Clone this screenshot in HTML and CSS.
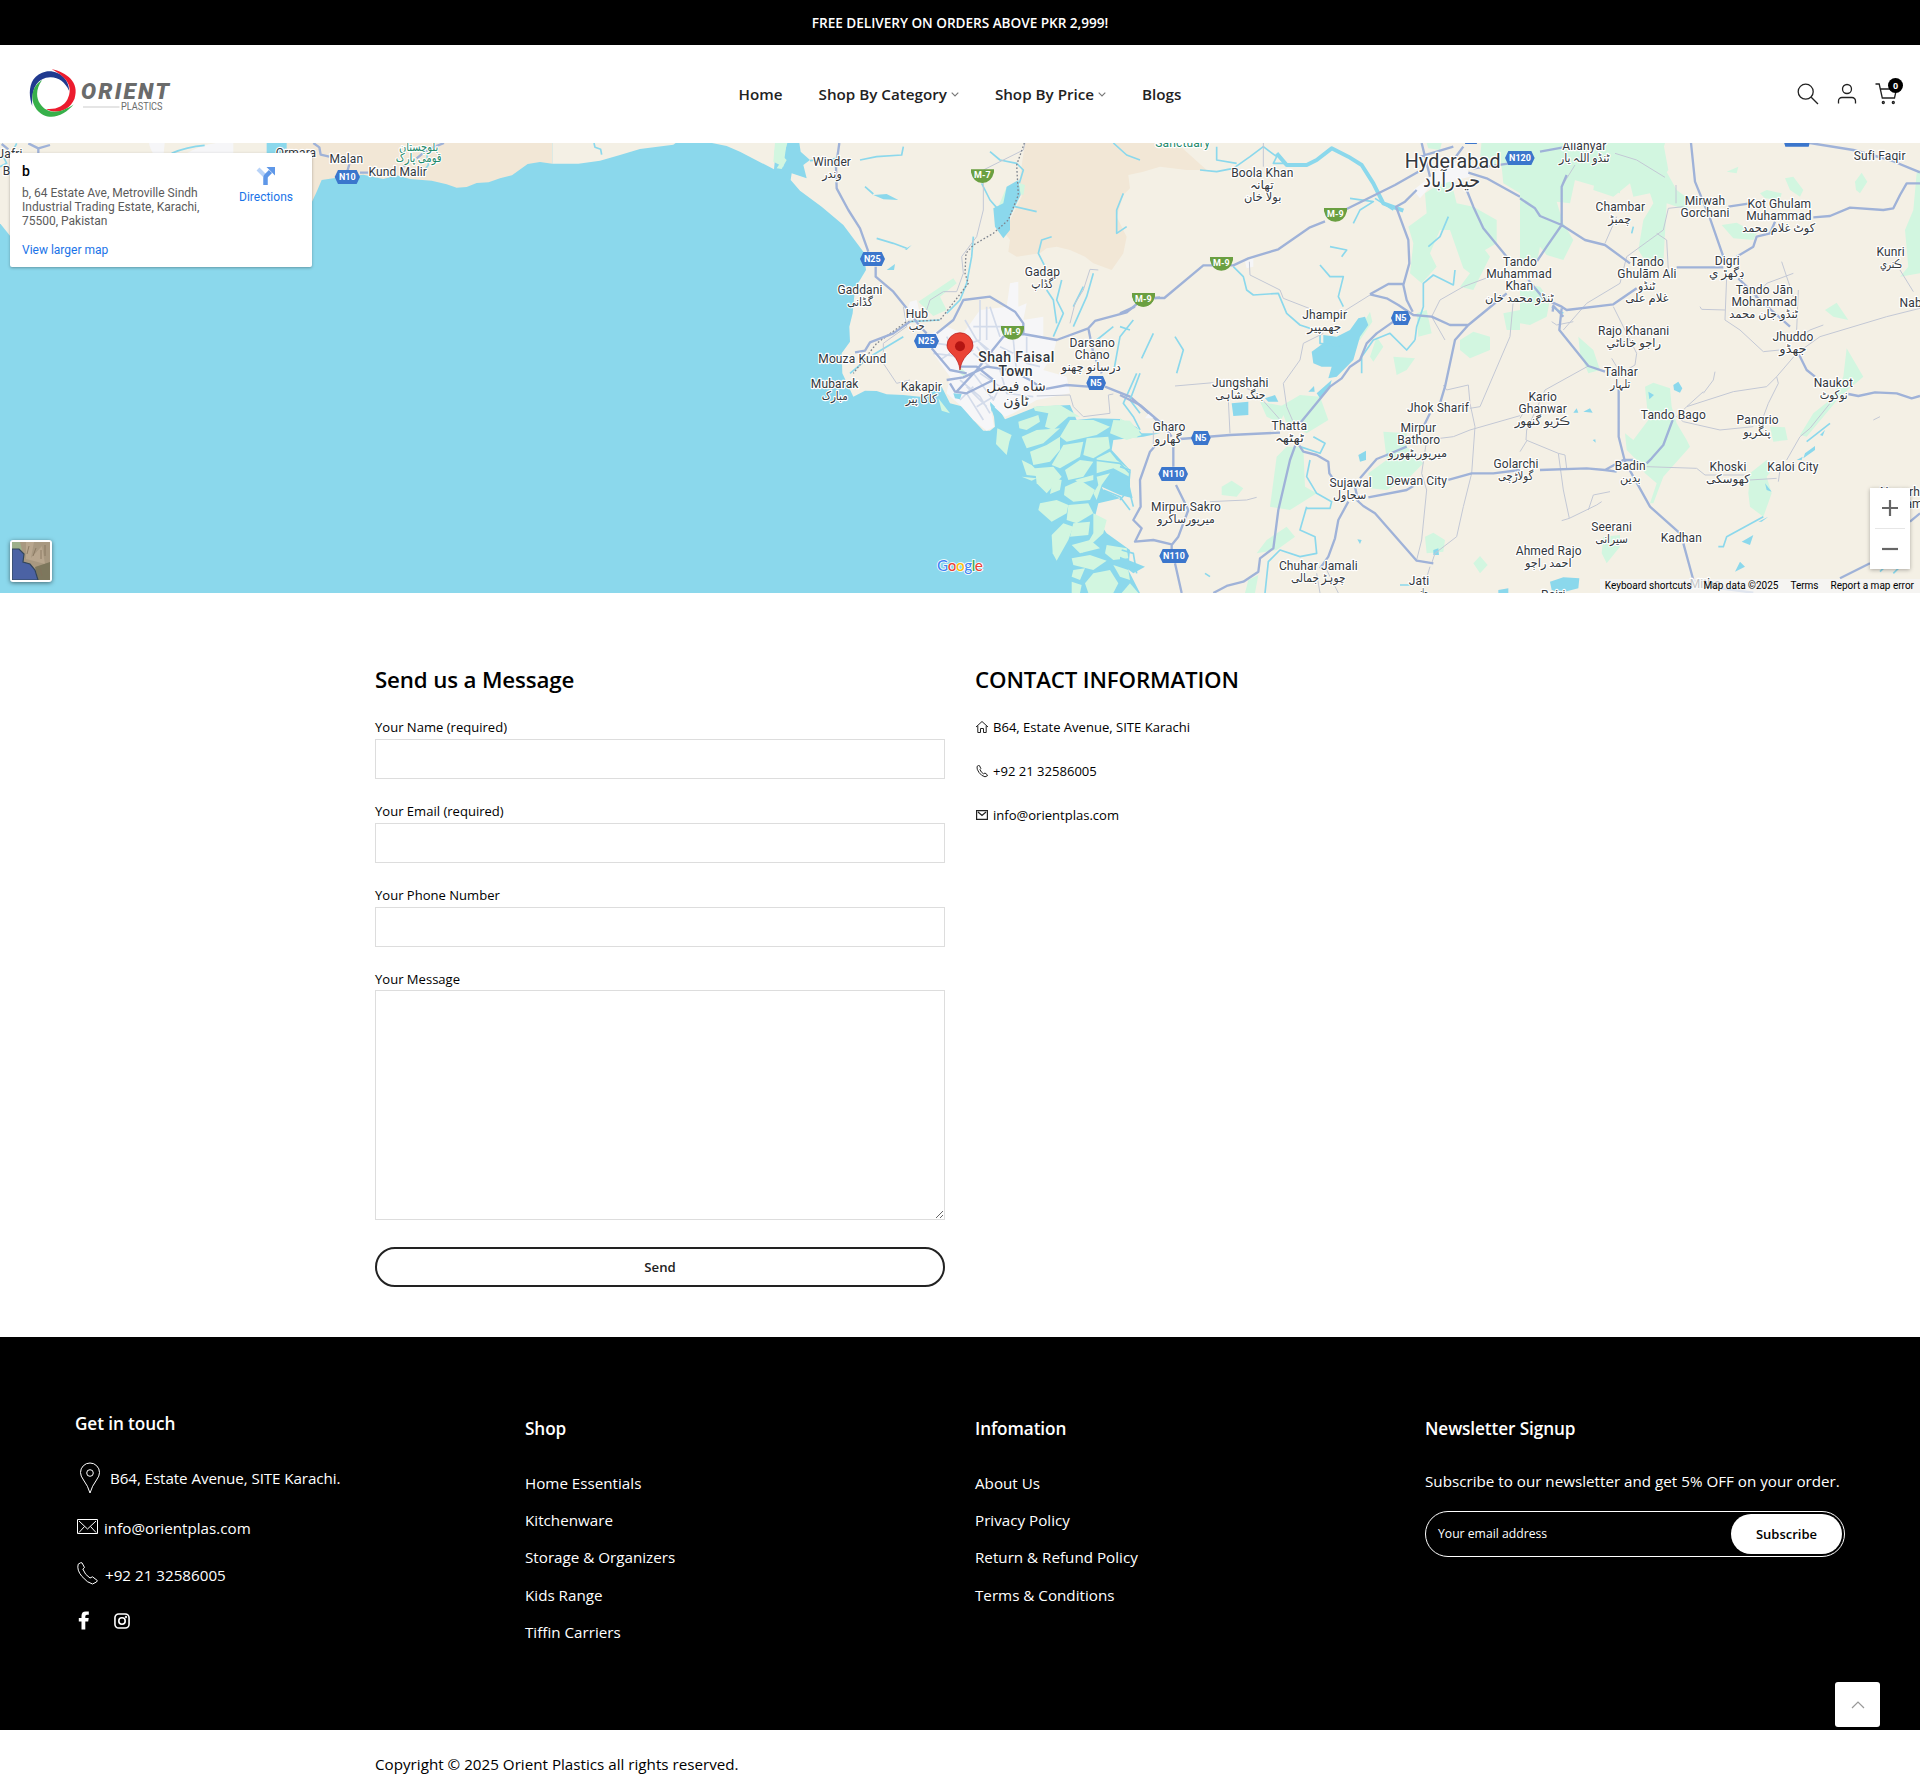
FILE: index.html
```html
<!DOCTYPE html>
<html lang="en">
<head>
<meta charset="utf-8">
<title>Contact – Orient Plastics</title>
<link rel="stylesheet" href="styles.css">
</head>
<body>
<div class="announce">FREE DELIVERY ON ORDERS ABOVE PKR 2,999!</div>

<header class="header">
  <a class="logo">
    <svg width="144" height="52" viewBox="28 67 144 52">
      <defs><path id="swoosh" d="M33 106C28 92 30 75 47 71.500 61 70 70 80 70 91 66 82 59 77 51 77.300 38 78 32 88 33 106Z"/></defs>
      <g transform="translate(-.8 -1)">
        <use href="#swoosh" fill="#213a8f"/>
        <use href="#swoosh" fill="#ec1c2e" transform="rotate(120 53.300 93.300)"/>
        <use href="#swoosh" fill="#37b04a" transform="rotate(240 53.300 93.300)"/>
      </g>
      <text class="logo-name" x="81" y="98.300" textLength="88">ORIENT</text>
      <text class="logo-sub" x="121" y="109" textLength="41.500" lengthAdjust="spacingAndGlyphs">PLASTICS</text>
      <path d="M83 106H119.500" stroke="#dcdddd" stroke-width="1.600"/>
    </svg>
  </a>
  <nav class="nav">
    <a>Home</a>
    <a>Shop By Category<svg class="caret" width="8" height="5" viewBox="0 0 8 5"><path d="M.7.700 4 4 7.300.700"/></svg></a>
    <a>Shop By Price<svg class="caret" width="8" height="5" viewBox="0 0 8 5"><path d="M.7.700 4 4 7.300.700"/></svg></a>
    <a>Blogs</a>
  </nav>
  <div class="tools">
    <svg width="22" height="22" viewBox="0 0 22 22"><circle cx="8.700" cy="8.700" r="7.500"/><path d="M14.200 14.200 21 21"/></svg>
    <svg width="20" height="22" viewBox="0 0 20 22"><circle cx="10" cy="6" r="4.500"/><path d="M1.500 20.500V18a3.500 3.500 0 0 1 3.500-3.500h10a3.500 3.500 0 0 1 3.500 3.500v2.500"/></svg>
    <span class="cart">
      <svg width="24" height="22" viewBox="0 0 24 22"><path d="M.5 1H4.200L7.300 15H19.500L21.500 6H5.500"/><circle cx="8.300" cy="19.500" r="1"/><circle cx="18.300" cy="19.500" r="1"/></svg>
      <b class="badge">0</b>
    </span>
  </div>
</header>

<section class="map">
<svg class="map-art" width="1920" height="450" viewBox="0 143 1920 450">
  <!-- western coast -->
  <g transform="scale(.33333)">
    <path class="land" d="M0 420H800V720H40L0 670Z"/>
    <path class="city" d="M445 420Q455 480 490 470L495 420ZM560 460Q620 425 700 425V465Z"/>
    <path class="river" d="M515 460Q560 440 614 436M0 500 20 490 10 470 40 450 50 430"/>
    <path class="road" d="M85 430 115 445 150 435M115 445V465M5 432 25 448"/>
    <g class="lbl s"><text x="30" y="474">Jafri</text><text x="20" y="526">B</text></g>
  </g>
  <g transform="translate(300 140) scale(.33333)">
    <path class="desert" d="M-40 0H757V71L720 66 683 72 636 106 600 115 566 127 530 129 500 141 470 143 440 133 395 122 330 117 290 106 250 117 190 104 120 112 65 120 50 155 36 185-40 210Z"/>
    <path class="land" d="M757 0H1140L1120 14 1020 27 960 45 900 62 835 71H757ZM1236 9H1430L1422 88 1320 35 1280 18Z"/>
    <path class="green" d="M1428 9H1462L1450 50 1460 60 1445 87 1430 85 1440 70 1422 40Z"/>
    <path class="river" d="M882 9 885 22 902 28 905 44M370 95 385 75 380 40"/>
    <path class="road" d="M40 9 58 22 62 44 88 50M148 72 142 95M180 98 205 98M350 55 375 35 400 22 432 9M310 80 325 68M-30 42 0 36"/>
    <g class="lbl s">
      <text x="139" y="70">Malan</text><text x="293" y="109">Kund Malir</text><text x="-12" y="52">Ormara</text>
    </g>
    <g class="lbl park"><text x="356" y="32" textLength="118" lengthAdjust="spacingAndGlyphs">بلوچستان</text><text x="356" y="66" textLength="138" lengthAdjust="spacingAndGlyphs">قومی پارک</text></g>
    <path class="shield" d="M114 90H170L180 111 170 132H114L104 111Z"/><text class="sh" x="142" y="121">N10</text>
  </g>

  <!-- Karachi and the Indus delta -->
  <g transform="translate(760 140) scale(.33333)">
    <path class="land" d="M118 9 122 35 150 60 130 75 140 115 95 100 92 120 120 152 185 200 250 255 310 335 318 390 300 420 285 445 278 520 268 560 270 605 245 640 247 700 280 770 315 752 350 753 380 763 430 765 480 770 545 740 570 790 610 800 640 840 670 872 690 872 705 860 702 830 690 795 700 780 735 838 830 800 930 795 950 840 1000 835 1080 837 1130 862 1145 880 1200 880 1150 890 1060 900 1055 930 1110 990 1110 1040 1118 1075 1080 1065 1025 1040 1030 1050 1080 1075 1015 1090 1005 1130 1040 1180 1110 1230 1105 1290 1140 1359H3600V0H118Z"/>
    <path class="desert" d="M795 9H1250L1340 90 1280 90 1200 80 1150 95 1105 105 1110 145 1090 165 1070 230 1100 290 1090 340 1055 390 1000 370 975 350 930 330 890 320 860 325 840 340 770 350 745 335 750 300 735 280 755 230 785 170 780 110Z"/>
    <path class="city" d="M450 485 470 480 480 520 430 545ZM490 590 560 560 610 580 660 510 740 500 750 430 775 425 775 500 800 490 790 540 850 530 850 590 890 600 880 640 850 690 920 710 930 760 830 780 760 820 735 830 690 790 702 860 680 872 640 840 600 795 560 760 570 710 520 640Z"/>
    <path class="green" d="M475 485 580 415 590 430 540 470 560 510 520 528ZM45 9H80L70 80 40 65ZM600 680 620 700 610 708 595 695ZM535 775 570 820 545 812ZM780 130 795 135 790 165 770 160ZM715 200 740 140 760 150 735 195Z"/>
    <g class="green">
      <path d="M712 865 755 885 748 905 740 945 708 912Z"/><path d="M775 845 835 825 840 845 800 870 778 865Z"/><path d="M820 800 900 795 960 830 925 830 880 870 855 860 865 820 825 812Z"/><path d="M785 890 830 870 900 865 850 910 800 925Z"/><path d="M930 840 1000 840 1050 860 1010 885 920 905 900 890Z"/><path d="M1060 840 1110 842 1145 885 1100 900 1050 880Z"/><path d="M810 935 860 915 900 890 900 930 870 965 820 975Z"/><path d="M910 915 970 905 960 950 900 985 875 975Z"/><path d="M980 895 1045 890 1050 925 1000 955 970 945Z"/><path d="M785 960 815 975 850 1010 800 1005Z"/><path d="M825 985 880 980 905 1010 860 1060 830 1030Z"/><path d="M915 990 960 960 1000 965 970 1010 925 1020Z"/><path d="M1010 955 1050 935 1070 960 1110 990 1108 1010 1060 985 1010 1000Z"/><path d="M945 1020 1000 1005 1000 1020 960 1030Z"/><path d="M915 1040 960 1020 1005 1050 990 1080 940 1085 912 1065Z"/><path d="M840 1090 890 1080 925 1095 920 1120 875 1145 835 1110Z"/><path d="M925 1095 985 1090 1000 1120 950 1150 920 1140Z"/><path d="M875 1185 910 1150 940 1160 925 1200 890 1262 878 1240Z"/><path d="M940 1150 990 1145 985 1185 930 1190Z"/><path d="M1000 1120 1040 1140 1030 1180 965 1240 1000 1180Z"/><path d="M935 1215 990 1200 1020 1225 960 1240Z"/><path d="M935 1255 990 1245 1040 1262 1000 1290 940 1275Z"/><path d="M1040 1215 1100 1225 1105 1255 1060 1260 1035 1240Z"/><path d="M940 1290 975 1285 960 1320 935 1310Z"/><path d="M1000 1300 1050 1290 1075 1330 1060 1359 985 1359 975 1330Z"/><path d="M1060 1275 1105 1290 1110 1320 1080 1310Z"/>
      <path d="M1010 1010 1050 1000 1025 1035 1010 1080 1000 1060 1015 1035Z"/><path d="M880 1015 905 1020 900 1050 870 1062Z"/><path d="M785 1010 830 1015 815 1022Z"/><path d="M935 1325 965 1335 960 1359H935Z"/><path d="M1110 1330 1135 1359H1085Z"/>
    </g>
    <path class="water" d="M740 140 775 120 782 165 750 230 750 270 730 295 705 260 700 205 730 190ZM340 165 380 162 415 180 370 178ZM380 390 405 372 402 390ZM415 320 440 330 455 315 435 328ZM580 760 605 762 600 778 585 775ZM690 785 705 800 695 815Z"/>
    <path class="river" d="M150 62 240 55M300 60 350 50 425 45 430 20M315 140 340 162M350 295 400 310 440 325M690 35 720 60 770 70 790 90 778 130M665 130 690 180 712 205M765 200 830 215M1140 60 1100 45 1060 9M1090 160 1070 210 1070 280 1100 260M875 290 845 300 835 340 855 380 850 400M905 420 890 480 910 520 880 590M1000 400 980 470 940 560M560 520 600 480 620 430 635 350 640 290M450 545 540 540M430 590 330 650 270 700M1060 560 1010 600M1120 540 1080 590 1060 700M1130 700 1090 790 1120 830 1140 870M1000 960 1080 970 1110 1000M1030 1050 1080 1070 1110 1110M860 450 880 480 890 550M970 440 940 500"/>
    <path class="minor" d="M795 9 790 30 750 50 670 90 670 210 650 290 605 350 610 400 590 455 550 455 510 480 500 510M430 500 440 560 370 610 370 670 410 730 450 720M930 765 940 800 970 830 1050 820 1045 765 1060 762M830 768 930 765M1015 390 990 388 970 450 945 490 930 550"/>
    <path class="street" d="M530 610 600 620 660 600 660 480M615 540 650 600 700 640M690 500 720 590M600 720 660 770 690 820M640 700 700 780 720 740 660 700M800 590 800 670 840 680M520 640 600 650 640 630M560 590 590 640M640 560 730 560M680 500 680 600M620 760 670 840M600 780 640 740M650 800 700 770M720 620 760 640M760 600 770 700M720 690 740 760 820 770M620 740 680 800M540 660 570 640M650 620 680 660M640 640 690 680M660 610 700 650"/>
    <path class="rail" d="M793 9 770 75 775 165 745 240 700 280 640 315 618 340 615 400 625 430 575 495 540 540 440 545 350 610 280 700"/>
    <path class="road" d="M238 9 228 80 230 145 265 210 300 265 325 335M347 380 347 410 400 455 440 505 480 560 500 580M285 637 315 632 330 607 400 580 450 545M515 625 570 690 620 700M530 580 580 540 610 480 690 470 765 515 790 550 790 582 890 600 985 565 1005 543 1100 517 1145 480 1200 472M985 565 1000 640 1025 700M790 582 730 590 690 640 650 690 590 755M560 720 610 712 680 680 750 690 810 720 850 748 920 735 985 740M1035 740 1110 770 1190 840M600 680 650 680 700 720 620 760 585 755 570 730"/>
    <g class="lbl">
      <text x="216" y="79">Winder</text><text x="216" y="114" textLength="58" lengthAdjust="spacingAndGlyphs">وندر</text>
      <text x="847" y="408">Gadap</text><text x="847" y="443" textLength="66" lengthAdjust="spacingAndGlyphs">گڈاپ</text>
      <text x="300" y="462">Gaddani</text><text x="300" y="497" textLength="78" lengthAdjust="spacingAndGlyphs">گڈانی</text>
      <text x="471" y="534">Hub</text><text x="470" y="570" textLength="48" lengthAdjust="spacingAndGlyphs">حب</text>
      <text x="277" y="670">Mouza Kund</text>
      <text x="224" y="744">Mubarak</text><text x="224" y="779" textLength="78" lengthAdjust="spacingAndGlyphs">مبارک</text>
      <text x="484" y="754">Kakapir</text><text x="484" y="788" textLength="94" lengthAdjust="spacingAndGlyphs">کاکا پیر</text>
      <text x="997" y="622">Darsano</text><text x="997" y="658">Chano</text><text x="993" y="694" textLength="178" lengthAdjust="spacingAndGlyphs">درسانو چھنو</text>
    </g>
    <g class="lbl town"><text x="769" y="665" textLength="228">Shah Faisal</text><text x="767" y="709">Town</text><text class="reg" x="768" y="754" textLength="178" lengthAdjust="spacingAndGlyphs">شاه فيصل</text><text class="reg" x="768" y="798" textLength="76" lengthAdjust="spacingAndGlyphs">ٹاؤن</text></g>
    <path class="mway" d="M633 88H702V97Q694 129 667 129T633 97ZM723 558H792V567Q784 599 757 599T723 567ZM1116 459H1185V468Q1177 500 1150 500T1116 468Z"/>
    <path class="shield" d="M310 336H365L375 357 365 378H310L300 357ZM472 582H527L537 603 527 624H472L462 603ZM988 708H1029L1038 729 1029 750H988L979 729Z"/>
    <g class="sh"><text x="667" y="115">M-7</text><text x="757" y="586">M-9</text><text x="1150" y="487">M-9</text><text x="337" y="367">N25</text><text x="499" y="613">N25</text><text x="1008" y="739">N5</text></g>
    <path d="M600 690Q597 664 580 646 561 630 561 617A39 39 0 0 1 639 617Q639 630 620 646 603 664 600 690Z" fill="#ea4335" stroke="#b31412" stroke-width="2"/><circle cx="600" cy="619" r="15" fill="#b31412"/>
    <text class="google" x="600" y="1294" textLength="138"><tspan fill="#4285f4">G</tspan><tspan fill="#ea4335">o</tspan><tspan fill="#fbbc04">o</tspan><tspan fill="#4285f4">g</tspan><tspan fill="#34a853">l</tspan><tspan fill="#ea4335">e</tspan></text>
  </g>

  <!-- Thatta to Hyderabad -->
  <g transform="translate(1120 140) scale(.33333)">
    <path class="green" d="M920 9H965L960 30 925 25ZM1085 0H1500V160L1330 110 1200 160 1150 130 1145 80 1080 60ZM915 160 990 110 1010 190 1060 200 1130 240 1130 310 1095 330 1110 350 1060 450 1020 440 1050 400 1030 385 990 270 960 270 930 340 950 380 905 430 870 400 880 310 865 260 920 220ZM890 520 920 510 935 580 895 590ZM1020 600 1060 575 1110 590 1110 630 1050 655 1020 630ZM1150 520 1200 510V570H1160ZM750 650 770 590 790 620 760 665ZM820 650 885 655 860 690 830 705ZM480 800 540 765 600 770 625 840 560 880 500 850ZM420 785 500 800 480 850 440 830ZM470 950 500 920 550 920 555 1040 590 1060 510 1110 450 1100ZM305 1040 335 1022 370 1045 350 1070 305 1065ZM790 875 860 880 860 920 910 970 870 1010 800 1050 750 1045 745 1000 800 960ZM500 1160 525 1190 470 1230 410 1240 440 1200ZM915 1190 940 1178 975 1200 970 1235 920 1240ZM1060 1270 1080 1248 1103 1275 1080 1300ZM0 835 60 870 50 895 0 890ZM700 600 750 515 757 545 720 600ZM385 1320 415 1305 405 1359H375Z"/>
    <path class="city" d="M880 150 920 120 980 60 1040 80 1050 110 1010 120 930 140 900 175ZM375 365 400 355 400 380 380 385ZM75 835 90 815 110 835Z"/>
    <path class="water" d="M575 635 610 610 610 585 650 590 690 570 715 535 735 530 745 555 720 590 700 660 650 710 625 715 635 680 605 680 580 670ZM335 790 385 785 385 825 340 828ZM565 755 582 738 584 755ZM435 775 465 765 475 785 445 785ZM715 945 738 932 738 960 720 965ZM590 760 635 720 630 740 600 775ZM940 1230 955 1225 957 1245 940 1245ZM712 1198 725 1200 720 1212ZM1135 1350 1165 1345 1165 1359H1135ZM0 1250 75 1280 40 1300 0 1270Z"/>
    <path class="bigriver" d="M470 40 500 75 560 75 590 60 635 25 685 50 725 75 760 130 790 190 850 212"/>
    <path class="river" d="M240 90 290 95 340 85 390 50 430 20 470 50 460 70 500 70M290 20 290 60 350 70M340 380 370 410 380 450 400 465 475 460 500 520 540 555 600 575M600 375 630 410 670 410 655 470 670 500M765 175 820 210M700 250 720 210 760 185 690 175M630 320 680 330 665 350M885 600 890 560 910 500 910 430 940 405 1000 435 1005 390M985 230 960 290 925 320M725 700 725 650 760 600 810 580 860 630 885 600M600 575 600 610 670 620M560 1100 540 1170 585 1190 590 1240 540 1250 480 1230 445 1265 435 1359M540 920 600 940 615 910 580 890M570 960 560 1010 590 1060 635 1085 630 1105 560 1105M165 590 190 630 170 700M100 580 65 655M60 700 30 780 60 820M0 560 30 570M0 980 30 990 25 1050 0 1080M30 1060 40 1100M5 1230 40 1240 50 1300M840 1335 875 1335M255 1300 270 1310"/>
    <path class="minor" d="M430 9V80M388 365 390 405 480 450 490 475 580 510M670 515 750 465M610 580 550 610 540 660 490 730 500 800 530 870M165 738 280 728M325 780 330 880M380 745 410 760 490 850M1150 395 1030 440 960 480 935 530 975 600M1180 480 1170 590 1080 800 1050 805M970 735 980 750 1045 735 1050 790 1065 860 1055 1000 1030 1100 1010 1190 945 1240 935 1270M1200 827 1050 870 1000 890 920 900 905 1000 920 1050 905 1200 890 1260M270 1085 380 1080 410 1072M590 1300 600 1359M620 1290 655 1359M100 870 100 920M930 1280 915 1330"/>
    <path class="road" d="M0 520 45 500M105 474 133 474 250 376 340 376 385 355 475 328 570 262 615 244M680 207 825 135 895 95M905 9 915 50 930 110M1000 60 1030 20M900 50 1000 20M1040 150 1060 200 1090 265 1160 350M1045 98 1100 115 1200 170M1060 85 1170 70M890 150 855 185 828 200 865 300 868 370 850 435 860 480 878 515M750 463 805 432 850 432M750 463 800 475 835 495 880 525 935 530 990 555 1045 555 1100 510 1160 460M1045 555 1005 600 975 740 960 790M930 820 910 860M820 545 770 580 740 610 720 660 690 680 665 715 630 740 540 850M0 765 60 795 130 855 155 890M180 897 330 885 480 878M160 910V980M168 1035 205 1110 175 1190 155 1215V1240M165 1270 185 1359M105 918 90 935 60 1020 62 1100 40 1140 65 1165 45 1205 100 1200 155 1213M530 905 510 960 475 1110 460 1225 420 1255 415 1295 370 1325 320 1338 280 1359M530 905 550 935 590 945 625 965 628 1000 650 1030M860 920 800 945 770 957 720 1015M985 1020 1055 1000 1120 1000 1200 990M745 1072 860 1050 880 1038M685 1085 655 1140 645 1195 625 1250 600 1285M710 1080 730 1098 765 1120 890 1262 940 1270M705 1040 715 1085"/>
    <g class="lbl">
      <text x="427" y="112">Boola Khan</text><text x="425" y="147" textLength="72" lengthAdjust="spacingAndGlyphs">تھانہ</text><text x="428" y="184" textLength="112" lengthAdjust="spacingAndGlyphs">بولا خان</text>
      <text x="614" y="538">Jhampir</text><text x="613" y="574" textLength="102" lengthAdjust="spacingAndGlyphs">جھمپیر</text>
      <text x="361" y="742">Jungshahi</text><text x="361" y="778" textLength="150" lengthAdjust="spacingAndGlyphs">جنگ شاہی</text>
      <text x="147" y="874">Gharo</text><text x="144" y="910" textLength="82" lengthAdjust="spacingAndGlyphs">گھارو</text>
      <text x="508" y="871">Thatta</text><text x="508" y="907" textLength="88" lengthAdjust="spacingAndGlyphs">ٹھٹھہ</text>
      <text x="954" y="817">Jhok Sharif</text>
      <text x="895" y="877">Mirpur</text><text x="896" y="913">Bathoro</text><text x="893" y="950" textLength="176" lengthAdjust="spacingAndGlyphs">میرپوربٹھورو</text>
      <text x="692" y="1042">Sujawal</text><text x="689" y="1078" textLength="100" lengthAdjust="spacingAndGlyphs">سجاول</text>
      <text x="890" y="1036">Dewan City</text>
      <text x="198" y="1114">Mirpur Sakro</text><text x="198" y="1150" textLength="172" lengthAdjust="spacingAndGlyphs">میرپورساکرو</text>
      <text x="595" y="1291">Chuhar Jamali</text><text x="595" y="1327" textLength="164" lengthAdjust="spacingAndGlyphs">چوہڑ جمالی</text>
      <text x="897" y="1336">Jati</text><text x="905" y="1370" textLength="40" lengthAdjust="spacingAndGlyphs">جاتی</text>
    </g>
    <g class="lbl park"><text x="188" y="22">Sanctuary</text></g>
    <g class="lbl big"><text x="998" y="84" textLength="288" lengthAdjust="spacingAndGlyphs">Hyderabad</text><text x="995" y="141" textLength="172" lengthAdjust="spacingAndGlyphs">حیدرآباد</text></g>
    <path class="mway" d="M612 204H681V213Q673 245 646 245T612 213ZM270 351H339V360Q331 392 304 392T270 360ZM36 459H105V468Q97 500 70 500T36 468Z"/>
    <path class="shield" d="M822 513H863L872 534 863 555H822L813 534ZM222 873H263L272 894 263 915H222L213 894ZM125 981H194L204 1002 194 1023H125L115 1002ZM128 1227H197L207 1248 197 1269H128L118 1248ZM1030 0H1076L1070 12H1036Z"/>
    <g class="sh"><text x="646" y="231">M-9</text><text x="304" y="379">M-9</text><text x="70" y="487">M-9</text><text x="842" y="544">N5</text><text x="242" y="904">N5</text><text x="160" y="1012">N110</text><text x="162" y="1258">N110</text></g>
  </g>

  <!-- Badin and the east -->
  <g transform="translate(1520 140) scale(.33333)">
    <path class="green" d="M0 60 130 60 165 120 150 190 110 185 130 250 160 300 130 360 80 345 60 320 50 370 0 380ZM180 9H435L420 60 470 150 510 180 500 210 440 190 430 370 380 370 355 330 370 240 400 190 390 160 340 170 330 130 280 170 220 150 230 80 170 60ZM390 9 430 9 445 90 430 110ZM0 430 60 440 90 480 80 530 30 555 0 550ZM605 255 650 248 710 280 700 300 640 295ZM720 160 740 150 785 160 780 180 735 175ZM795 115 820 110 850 150 840 170 810 150ZM1005 125 1025 98 1042 125 1020 160 1008 150ZM1190 100 1200 90V400L1140 410 1165 380 1155 270 1180 210ZM915 510 950 488 985 540 940 530ZM175 590 220 630 240 690 205 700 180 640ZM375 740 400 728 450 745 455 800 470 850 500 900 510 920 430 1010 400 1090 390 1090 410 1030 375 1000 350 960 320 930 315 880 340 900 385 840ZM980 625 1030 710 960 770 860 890 840 885 880 820 930 780 970 710ZM750 860 795 862 803 900 760 905ZM690 1000 740 960 760 985 740 1010 755 1060 730 1130 690 1100 685 1060ZM250 1190 300 1185 300 1220 260 1270 245 1240ZM620 95 655 80 650 100Z"/>
    <path class="water" d="M460 735 475 725 487 745 480 758 462 750ZM385 755 402 765 388 778ZM90 1325 130 1312 178 1315 175 1345 120 1359 95 1350ZM160 818 170 805 175 818ZM190 815 210 805 218 818ZM855 940 885 918 885 930 850 955ZM830 960 848 950 845 960ZM665 1205 700 1185 690 1215ZM645 1295 660 1265 675 1280ZM715 1145 745 1130 725 1145ZM900 885 915 870 908 888ZM218 900 226 898 227 908ZM735 1030 755 1055 740 1050Z"/>
    <path class="river" d="M95 500 130 520M730 1130 620 1190 610 1220 595 1220M340 260 335 280M1080 1295 1090 1285M1120 1300 1135 1285M860 905 930 850"/>
    <path class="minor" d="M165 75 125 140M285 40 350 60 435 112M468 135V190M490 200 445 205 430 270 320 350 300 430 200 490 130 570M290 230 255 310M410 280 440 300 445 390M620 410 615 540 660 570 730 635 780 630M540 500 545 508 615 510M785 365 820 470M820 400 740 430 700 480M835 450 830 570M1200 505 1100 530 900 590 830 640 770 710 740 740 640 755 500 800 470 830 490 845 600 870 700 860M835 595 870 570 910 555M770 710 775 730 745 790 715 870M550 760 580 720 585 695M500 800 550 755M280 500 350 640 345 675 320 690M275 655 290 680M205 678 75 750 20 870 18 900 115 940 130 1050 148 1135 125 1142M115 940 135 945 140 985M148 1135 230 1095 245 1085M205 1110 220 1065 270 1055M0 935 20 903M380 980 530 985 555 1005 680 1005M690 1020 770 1015M775 1025 780 990M800 960 840 890 870 865 930 790M1140 390 1180 455M0 835 15 810M1060 840 1080 830M95 545 110 555 160 545"/>
    <path class="road" d="M0 175 45 205 60 228 125 255 195 300 255 315 330 370M60 35 130 22M125 255V140L140 105M125 255 80 320 50 365M25 420 70 475 125 500 140 510 280 493 350 445M125 505 118 570 205 678 255 695M470 382 610 382M513 9 525 125 570 235 610 350M625 200 690 190M870 9 1000 30 1110 60 1200 97M1200 130H1160L1140 165 1120 205 1090 210 990 203 930 228 880 232M765 245 750 280 710 290 700 320 650 350M655 415 680 440 720 480 810 560M835 640 860 690 885 710M985 762 1015 768 1065 757 1130 760 1175 775 1200 768M296 745V890L315 965 390 1100 480 1180M458 840 430 915 395 955 380 970M60 990 200 985 255 990 310 960 340 960M255 990 290 995M490 1210 520 1320 560 1340 700 1358M960 1315 1050 1270M1170 1145 1200 1120M98 515 100 497 130 530"/>
    <g class="lbl">
      <text x="0" y="378">Tando</text><text x="-3" y="414">Muhammad</text><text x="-2" y="450">Khan</text><text x="-2" y="486" textLength="206" lengthAdjust="spacingAndGlyphs">ٹنڈو محمد خان</text>
      <text x="-12" y="984">Golarchi</text><text x="-13" y="1020" textLength="106" lengthAdjust="spacingAndGlyphs">گولاڑچی</text>
      <text x="193" y="30">Allahyar</text><text x="193" y="66" textLength="152" lengthAdjust="spacingAndGlyphs">ٹنڈو اللہ یار</text>
      <text x="1079" y="60">Sufi Faqir</text>
      <text x="555" y="196">Mirwah</text><text x="555" y="231">Gorchani</text>
      <text x="778" y="204">Kot Ghulam</text><text x="777" y="240">Muhammad</text><text x="776" y="276" textLength="218" lengthAdjust="spacingAndGlyphs">کوٹ غلام محمد</text>
      <text x="301" y="213">Chambar</text><text x="299" y="249" textLength="68" lengthAdjust="spacingAndGlyphs">چمبڑ</text>
      <text x="1112" y="348">Kunri</text><text x="1113" y="384" textLength="66" lengthAdjust="spacingAndGlyphs">ڪنري</text>
      <text x="622" y="376">Digri</text><text x="620" y="412" textLength="106" lengthAdjust="spacingAndGlyphs">ڊگهڙ ي</text>
      <text x="381" y="378">Tando</text><text x="381" y="414">Ghulām Ali</text><text x="380" y="450" textLength="52" lengthAdjust="spacingAndGlyphs">ٹنڈو</text><text x="381" y="486" textLength="130" lengthAdjust="spacingAndGlyphs">غلام علی</text>
      <text x="733" y="462">Tando Jān</text><text x="733" y="498">Mohammad</text><text x="731" y="534" textLength="206" lengthAdjust="spacingAndGlyphs">ٹنڈو جان محمد</text>
      <text x="1182" y="501">Naba</text>
      <text x="341" y="585">Rajo Khanani</text><text x="341" y="621" textLength="164" lengthAdjust="spacingAndGlyphs">راجو خاناڻي</text>
      <text x="819" y="603">Jhuddo</text><text x="819" y="640" textLength="82" lengthAdjust="spacingAndGlyphs">جھڈو</text>
      <text x="303" y="708">Talhar</text><text x="301" y="744" textLength="60" lengthAdjust="spacingAndGlyphs">تلہار</text>
      <text x="940" y="742">Naukot</text><text x="941" y="778" textLength="84" lengthAdjust="spacingAndGlyphs">نوکوٹ</text>
      <text x="68" y="783">Kario</text><text x="68" y="819">Ghanwar</text><text x="67" y="855" textLength="166" lengthAdjust="spacingAndGlyphs">ڪڙيو گنهور</text>
      <text x="460" y="838">Tando Bago</text>
      <text x="713" y="853">Pangrio</text><text x="711" y="889" textLength="82" lengthAdjust="spacingAndGlyphs">پنگريو</text>
      <text x="331" y="991">Badin</text><text x="331" y="1027" textLength="62" lengthAdjust="spacingAndGlyphs">بدین</text>
      <text x="624" y="993">Khoski</text><text x="624" y="1029" textLength="132" lengthAdjust="spacingAndGlyphs">کھوسکی</text>
      <text x="819" y="994">Kaloi City</text>
      <text x="1150" y="1068">Nagarha</text><text x="1155" y="1104">Param</text>
      <text x="275" y="1174">Seerani</text><text x="275" y="1210" textLength="98" lengthAdjust="spacingAndGlyphs">سیرانی</text>
      <text x="484" y="1207">Kadhan</text>
      <text x="86" y="1246">Ahmed Rajo</text><text x="85" y="1282" textLength="140" lengthAdjust="spacingAndGlyphs">احمد راڄو</text>
      <text x="556" y="1344">Mitho</text><text x="100" y="1378">Rajri</text>
    </g>
    <path class="shield" d="M-35 33H34L44 54 34 75H-35L-45 54ZM790 0H872L866 20H796Z"/><text class="sh" x="0" y="64">N120</text>
  </g>
</svg>

<div class="place">
  <div class="place-text">
    <strong>b</strong>
    <p>b, 64 Estate Ave, Metroville Sindh Industrial Trading Estate, Karachi, 75500, Pakistan</p>
    <a>View larger map</a>
  </div>
  <a class="directions">
    <svg width="20" height="20" viewBox="0 0 20 20"><path d="M2 3 9.500 10.500" stroke="#b8d3f8" stroke-width="4" fill="none"/><path d="M9.500 19V12Q9.500 10.500 10.500 9.500L14.500 5.500" stroke="#5e97e8" stroke-width="4.500" fill="none"/><path d="M10.500 1H19V9.500Z" fill="#5e97e8"/></svg>
    Directions
  </a>
</div>
<div class="layer">
  <svg width="38" height="38" viewBox="0 0 38 38"><rect width="38" height="38" fill="#a89880"/><path d="M14 0H22L19 16 30 4 33 22 22 19 14 17Z" fill="#b8a68e"/><path d="M23 25 38 20V38H26Z" fill="#7d775d"/><path d="M0 0H8L10 8 0 7Z" fill="#9db08a"/><path d="M0 7 7 7 12 12 11 20 18 22 23 28 26 38H0Z" fill="#4b62a4" stroke="#32465a" stroke-width="1.200"/><path d="M17 4 15 12M24 6 21 14M29 8V17M33 3V14M28 26 30 34" stroke="#84725c" stroke-width=".8"/></svg>
</div>
<div class="zoom"><span><svg width="16" height="16" viewBox="0 0 16 16"><path d="M0 8H16M8 0V16"/></svg></span><span><svg width="16" height="16" viewBox="0 0 16 16"><path d="M0 8H16"/></svg></span></div>
<div class="credits"><span>Keyboard shortcuts</span><span>Map data ©2025</span><span>Terms</span><span>Report a map error</span></div>
</section>

<main class="contact">
  <form class="form">
    <h3>Send us a Message</h3>
    <div class="field"><label>Your Name (required)</label><input type="text"></div>
    <div class="field"><label>Your Email (required)</label><input type="email"></div>
    <div class="field"><label>Your Phone Number</label><input type="tel"></div>
    <div class="field"><label>Your Message</label><textarea></textarea></div>
    <button type="button" class="send">Send</button>
  </form>
  <div class="info">
    <h3>CONTACT INFORMATION</h3>
    <p><svg width="14" height="14" viewBox="0 0 14 14"><path d="M1 7 7 1.500 13 7M2.800 5.800V12.500H5.500V8.500H8.500V12.500H11.200V5.800"/></svg>B64, Estate Avenue, SITE Karachi</p>
    <p><svg width="14" height="14" viewBox="0 0 14 14"><path d="M3.500 1.500 2 2.500Q1.500 5 4 8.500T10 12.800L12.300 11.800 12.500 11 10 9 8.500 9.800Q6 8.500 5 5.500L5.800 4.500 4.500 1.700Z"/></svg>+92 21 32586005</p>
    <p><svg width="14" height="14" viewBox="0 0 14 14"><path d="M1.600 2.600H12.400V11.400H1.600ZM3 4 7 7.500 11 4" stroke-width="1.200"/></svg>info@orientplas.com</p>
  </div>
</main>

<footer class="footer">
  <div class="col touch">
    <h4>Get in touch</h4>
    <p class="addr"><svg width="30" height="32" viewBox="0 0 30 32"><path d="M15 31Q13 24 8.500 18 5.500 14 5.500 10.500A9.500 9.500 0 0 1 24.500 10.500Q24.500 14 21.500 18 17 24 15 31Z"/><circle cx="15" cy="11" r="3.300"/></svg>B64, Estate Avenue, SITE Karachi.</p>
    <p class="mail"><svg width="21" height="15" viewBox="0 0 21 15"><path d="M.5.500H20.500V14.500H.5ZM2 2 10.500 10 19 2M2 13.500 7.500 7.500M19 13.500 13.500 7.500"/></svg>info@orientplas.com</p>
    <p class="phone"><svg width="21" height="23" viewBox="0 0 21 23"><path d="M3.500.800 1.200 2.200Q-.5 8 5 14.500T15.500 22L19.500 20 20.300 18.500 15.500 14.800 13 16Q8 13 5.800 7L7.500 5.500 5 .800Z"/></svg>+92 21 32586005</p>
    <div class="social">
      <svg width="12" height="19" viewBox="0 0 12 19"><path d="M3.500 18.500V10.500H.8V7H3.500V4.800Q3.500.500 7.800.500H10.800V3.700H9Q7.300 3.700 7.300 5.200V7H10.700L10.200 10.500H7.300V18.500Z" fill="#fff"/></svg>
      <svg width="16" height="16" viewBox="0 0 17 17" fill="none" stroke="#fff" stroke-width="1.700"><rect x="1" y="1" width="15" height="15" rx="4"/><circle cx="8.500" cy="8.500" r="3.400"/><circle cx="12.700" cy="4.300" r=".4"/></svg>
    </div>
  </div>
  <div class="col">
    <h4>Shop</h4>
    <ul><li>Home Essentials</li><li>Kitchenware</li><li>Storage &amp; Organizers</li><li>Kids Range</li><li>Tiffin Carriers</li></ul>
  </div>
  <div class="col">
    <h4>Infomation</h4>
    <ul><li>About Us</li><li>Privacy Policy</li><li>Return &amp; Refund Policy</li><li>Terms &amp; Conditions</li></ul>
  </div>
  <div class="col news">
    <h4>Newsletter Signup</h4>
    <p>Subscribe to our newsletter and get 5% OFF on your order.</p>
    <div class="signup"><span>Your email address</span><button type="button">Subscribe</button></div>
  </div>
  <a class="to-top"><svg width="14" height="8" viewBox="0 0 14 8"><path d="M1 7 7 1 13 7"/></svg></a>
</footer>
<div class="copyright">Copyright © 2025 Orient Plastics all rights reserved.</div>
</body>
</html>
```

FILE: styles.css
```css
* { box-sizing: border-box; }
body { margin: 0; background: #fff; color: #000; font: 15.2px/24px "Open Sans", sans-serif; overflow: hidden; }
h3, h4, p, ul { margin: 0; padding: 0; }
ul { list-style: none; }
svg { display: block; flex: none; }

.announce { height: 45px; background: #000; color: #fff; text-align: center; font-size: 13.600px; font-weight: 600; line-height: 46px; letter-spacing: -.03px; }

.header { height: 98px; padding: 0 28px; display: grid; grid-template-columns: 1fr auto 1fr; align-items: center; }
.logo-name { font: italic 900 22.500px Roboto, sans-serif; fill: #6a6b6b; }
.logo-sub { font: 400 10.500px Roboto, sans-serif; fill: #6a6b6b; }
.nav { display: flex; gap: 36px; color: #222; font-size: 15.200px; font-weight: 600; }
.nav a { display: flex; align-items: center; }
.caret { margin-left: 4px; fill: none; stroke: #777; stroke-width: 1.100; }
.tools { justify-self: end; display: flex; gap: 18px; margin-right: -7px; }
.tools svg { fill: none; stroke: #222; stroke-width: 1.300; }
.cart { position: relative; }
.badge { position: absolute; left: 13px; top: -5px; width: 15px; height: 15px; border-radius: 50%; background: #000; color: #fff; font-size: 9px; line-height: 15px; text-align: center; }

.map { position: relative; height: 450px; background: #8bd8ec; overflow: hidden; font-family: Roboto, sans-serif; }
.land { fill: #f4f0e5; }
.desert { fill: #f2e7d6; }
.city { fill: #f6f6f8; }
.green { fill: #d2f6e0; }
.water { fill: #8bd8ec; }
.river, .bigriver, .road, .minor, .street, .rail { fill: none; stroke-linejoin: round; }
.river { stroke: #8bd8ec; stroke-width: 5; }
.bigriver { stroke: #8bd8ec; stroke-width: 12; }
.road { stroke: #9fb2d8; stroke-width: 7; }
.minor { stroke: #c3c8d5; stroke-width: 3; }
.street { stroke: #d3dbea; stroke-width: 5; }
.rail { stroke: #7f858f; stroke-width: 4; stroke-dasharray: 5 6; }
.lbl { font: 36px Roboto, "DejaVu Sans", sans-serif; text-anchor: middle; fill: #33373c; stroke: #fff; stroke-width: 7px; stroke-linejoin: round; paint-order: stroke; letter-spacing: .4px; }
.town { font-size: 42px; font-weight: 500; }
.reg { font-weight: 400; }
.big { font-size: 58px; }
.park { fill: #1f8a6b; }
.shield { fill: #3b76cc; }
.mway { fill: #6a9f41; }
.sh { font: 700 27px Roboto, sans-serif; fill: #fff; text-anchor: middle; }
.google { font: 500 46px Lato, sans-serif; text-anchor: middle; stroke: #fff; stroke-width: 5px; paint-order: stroke; }

.place { position: absolute; left: 10px; top: 10px; width: 302px; height: 114px; padding: 9px 0 0 12px; display: flex; background: #fff; border-radius: 2px; box-shadow: 0 1px 3px rgba(0,0,0,.3); font-size: 12px; line-height: 14px; }
.place-text { flex: none; width: 190px; }
.place strong { display: block; font-size: 14px; font-weight: 500; line-height: 18px; }
.place p { margin: 6px 0 15px; color: #5b5b5b; }
.place a { color: #1a73e8; }
.directions { flex: none; display: flex; flex-direction: column; align-items: center; gap: 4px; width: 80px; margin-left: 14px; padding-top: 4px; }
.layer { position: absolute; left: 10px; top: 397px; padding: 2px; background: #fff; border-radius: 3px; box-shadow: 0 1px 4px rgba(0,0,0,.5); }
.zoom { position: absolute; right: 10px; top: 345px; width: 40px; height: 81px; padding: 0 5px; background: #fff; box-shadow: 0 1px 4px rgba(0,0,0,.3); }
.zoom span { display: flex; height: 40px; align-items: center; justify-content: center; }
.zoom span + span { border-top: 1px solid #e6e6e6; height: 41px; }
.zoom svg { stroke: #666; stroke-width: 2.200; }
.credits { position: absolute; right: 0; bottom: 0; height: 14px; padding: 0 6px 0 5px; display: flex; gap: 12px; background: rgba(245,245,245,.75); font-size: 10px; line-height: 14px; }

.contact { width: 1170px; margin: 0 auto; padding: 71px 0 50px; display: grid; grid-template-columns: 570px 570px; gap: 30px; font-size: 13.050px; line-height: 22px; }
h3 { font-size: 22.300px; font-weight: 600; line-height: 32px; letter-spacing: -.15px; margin-bottom: 20px; }
label { display: block; margin-bottom: 1px; }
input, textarea { display: block; width: 100%; height: 40px; border: 1px solid #ddd; border-radius: 0; background: #fff; }
.field { margin-bottom: 21px; }
textarea { height: 230px; margin-top: -1px; }
.send { display: block; width: 100%; height: 40px; margin-top: 27px; border: 2px solid #222; border-radius: 20px; background: #fff; color: #222; font: 600 13.200px "Open Sans", sans-serif; }
.info p { display: flex; align-items: center; gap: 4px; margin-bottom: 22px; }
.info svg { fill: none; stroke: #222; stroke-width: 1; }

.footer { position: relative; height: 393px; padding: 75px 75px 0; display: grid; grid-template-columns: repeat(4, 420px); gap: 30px; background: #000; color: #fff; }
h4 { font-size: 17.200px; font-weight: 600; line-height: 24px; letter-spacing: -.1px; }
.col { padding-top: 5px; }
.col ul { margin-top: 30px; display: flex; flex-direction: column; gap: 13.200px; }
.touch { padding-top: 0; }
.touch p { display: flex; align-items: center; }
.touch p svg { fill: none; stroke: #fff; stroke-width: 1; }
.touch .addr { margin-top: 26px; height: 32px; gap: 5px; letter-spacing: -.09px; }
.touch .mail { margin-top: 22px; height: 24px; gap: 6px; padding-left: 2px; }
.touch .phone { margin-top: 23px; height: 24px; gap: 7px; padding-left: 2px; }
.mail svg { margin-top: -4px; }
.phone svg { margin-top: -3px; }
.social { display: flex; align-items: center; gap: 24px; margin: 24px 0 0 3px; }
.news p { margin: 28px 0 18px; white-space: nowrap; }
.signup { height: 46px; padding: 2px 2px 2px 12px; border: 1px solid #fff; border-radius: 23px; display: flex; align-items: center; justify-content: space-between; font-size: 12.200px; }
.signup button { width: 111px; height: 40px; border: 0; border-radius: 20px; background: #fff; color: #000; font: 600 13px "Open Sans", sans-serif; }
.to-top { position: absolute; right: 40px; bottom: 3px; width: 45px; height: 45px; border-radius: 3px; background: #fff; display: flex; align-items: center; justify-content: center; }
.to-top svg { fill: none; stroke: #999; stroke-width: 1.200; }
.copyright { width: 1170px; height: 52px; margin: 0 auto; padding-top: 22px; }
```
